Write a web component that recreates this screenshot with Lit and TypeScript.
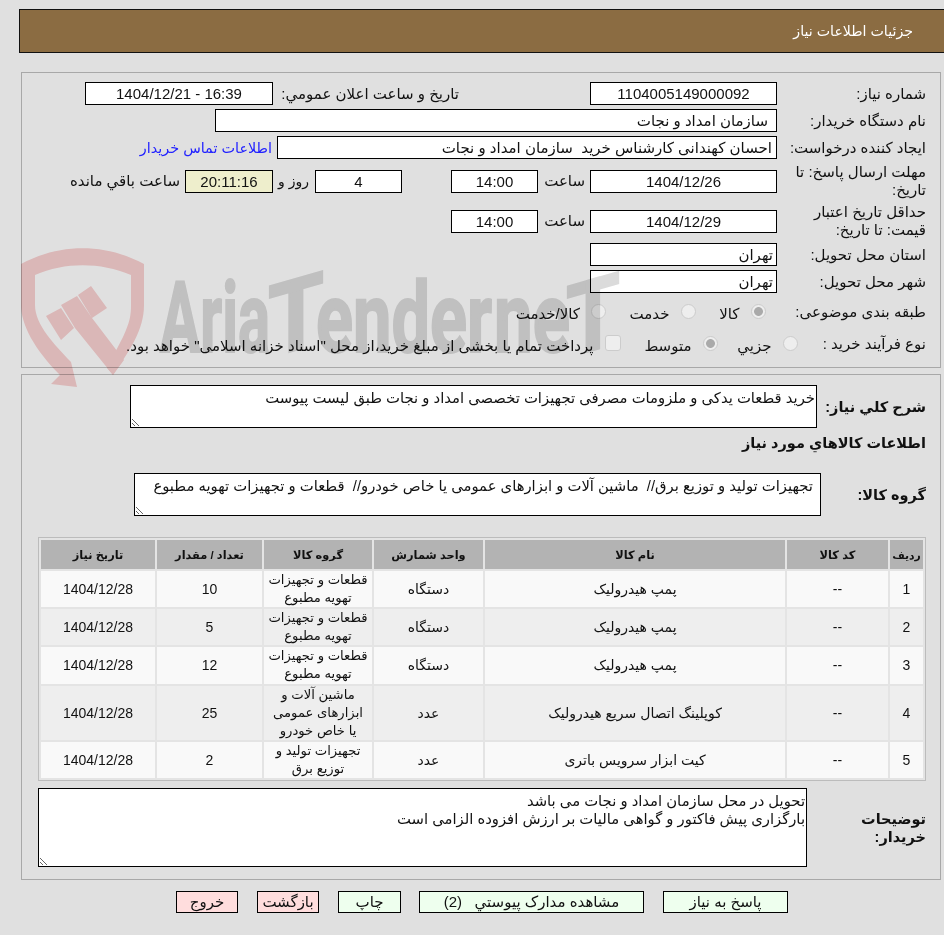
import { LitElement, html, css } from "lit";
import { customElement } from "lit/decorators.js";

const rows = [
  ["1", "--", "پمپ هیدرولیک", "دستگاه", "قطعات و تجهیزات\nتهویه مطبوع", "10", "1404/12/28"],
  ["2", "--", "پمپ هیدرولیک", "دستگاه", "قطعات و تجهیزات\nتهویه مطبوع", "5", "1404/12/28"],
  ["3", "--", "پمپ هیدرولیک", "دستگاه", "قطعات و تجهیزات\nتهویه مطبوع", "12", "1404/12/28"],
  ["4", "--", "کوپلینگ اتصال سریع هیدرولیک", "عدد", "ماشین آلات و\nابزارهای عمومی\nیا خاص خودرو", "25", "1404/12/28"],
  ["5", "--", "کیت ابزار سرویس باتری", "عدد", "تجهیزات تولید و\nتوزیع برق", "2", "1404/12/28"],
];
const heads = ["ردیف", "کد کالا", "نام کالا", "واحد شمارش", "گروه کالا", "تعداد / مقدار", "تاریخ نیاز"];

@customElement("app-root")
export class AppRoot extends LitElement {
  static styles = css`
    :host {
      display: block; overflow: hidden; position: relative; height: 935px;
      background: #e0e0e0; color: #111; direction: rtl;
      font: 15px/18px "Liberation Sans", "DejaVu Sans", sans-serif;
    }
    * { box-sizing: border-box; }
    .title {
      margin: 9px -10px 0 19px; height: 44px; background: #8b6c42; border: 1px solid #111;
      color: #fff; display: flex; align-items: center; padding-right: 40px; font-size: 14.2px;
    }
    .panel { width: 920px; margin: 0 3px 0 21px; border: 1px solid #a8a8a8; }
    .p1 { margin-top: 19px; padding: 9px 14px 11px 0; height: 296px; }
    .p2 { margin-top: 6px; padding: 10px 14px 12px 16px; height: 506px; }
    .row { display: flex; align-items: center; margin-bottom: 4px; min-height: 23px; }
    .tall { height: 36px; }
    .opts { height: 26px; margin: 6px 0 4px; }
    .lab { width: 149px; flex: none; padding-left: 6px; }
    .narrow { width: 128.5px; }
    input.f {
      height: 23px; border: 1px solid #000; background: #fff; color: #111; font: inherit;
      padding: 0 2px; text-align: center; flex: none; outline: none; border-radius: 0; margin: 0;
    }
    input.l { text-align: right; padding-right: 3px; }
    input.p8 { padding-right: 8px; }
    input.p4 { padding-right: 4px; }
    .w187 { width: 187px; } .w188 { width: 188px; } .w87 { width: 87px; }
    .w562 { width: 562px; } .w500 { width: 500px; }
    input.timer { width: 88px; background: #eeeecc; }
    .s1 { margin-right: 131px; width: 186px; flex: none; white-space: nowrap; }
    .link { color: #2222ff; margin-right: 5px; text-decoration: none; font-size: 14.4px; }
    .s2 { width: 52px; padding-right: 5px; flex: none; }
    input.s3 { margin-right: 49px; }
    .s4 { width: 42px; padding-right: 6px; flex: none; font-size: 14px; }
    .s5 { margin-right: 5px; white-space: nowrap; }
    .opt { display: flex; align-items: center; flex: none; white-space: nowrap; }
    .opt span { margin-right: 11px; position: relative; top: 2px; }
    .o1 { width: 70px; margin-right: 11.5px; }
    .o2 { width: 89.5px; }
    .o3 { width: 80px; }
    .o4 { width: 97px; }
    input.r, input.c {
      appearance: none; -webkit-appearance: none; width: 15px; height: 15px; margin: 0; flex: none;
      background: #eee; border: 1px solid #ccc; position: relative; top: -1px;
    }
    input.r { border-radius: 50%; }
    input.r:checked { background: radial-gradient(circle, #aaa 0 4px, #eee 4.8px); }
    input.c { border-radius: 3px; width: 16px; height: 16px; }
    .b { font-weight: bold; font-size: 14.5px; }
    .area {
      display: block; border: 1px solid #000; background: #fff; color: #111; font: inherit;
      font-size: 14.8px; padding: 3px 1px; resize: vertical; outline: none; flex: none; margin: 0;
      border-radius: 0; overflow: hidden;
    }
    .a1 { width: 687px; height: 43px; }
    .a2 { width: 687px; height: 43px; padding-right: 7px; }
    .a3 { width: 769px; height: 79px; }
    .lab2 { width: 109px; flex: none; }
    .lab3 { width: 105px; flex: none; }
    .lab4 { width: 119px; flex: none; padding-left: 30px; }
    .h { height: 18px; margin: 6px 0 21px; }
    .gr { margin: 0; }
    table {
      width: 888px; margin: 21px 0 7px 0; table-layout: fixed; border: 1px solid #bcbcbc;
      border-spacing: 2px; background: #e4e4e4; font-size: 14px;
    }
    th { background: #b3b3b3; height: 29px; padding: 0; font-size: 11.4px; font-weight: bold; }
    th:first-child { font-size: 10.8px; }
    td { text-align: center; padding: 0; line-height: 18.1px; white-space: pre-line; }
    td:nth-child(5) { font-size: 13.2px; }
    tbody tr:nth-child(odd) td { background: #f9f9f9; }
    tbody tr:nth-child(even) td { background: #eeeeee; }
    .notes { align-items: center; margin: 0; }
    .btns { display: flex; gap: 19px; margin-top: 11px; padding-right: 156px; }
    button {
      height: 22px; border: 1px solid #000; font: inherit; color: #111; padding: 0; margin: 0;
      flex: none; border-radius: 0; line-height: 20px;
    }
    .g { background: #eeffee; } .p { background: #ffdddd; }
    .bw1 { width: 125px; } .bw2 { width: 225px; } .bw3 { width: 63px; margin-right: -1px; } .bw4 { width: 62px; }
    .wm {
      position: absolute; left: 0; top: 0; width: 944px; height: 935px;
      pointer-events: none; mix-blend-mode: multiply; direction: ltr;
    }
    .wm text { font-family: Roboto, "Liberation Sans", sans-serif; font-weight: 700; fill: #dbdbdb; stroke: #dbdbdb; stroke-width: 2px; }
  `;

  render() {
    return html`
      <div class="title">جزئیات اطلاعات نیاز</div>

      <section class="panel p1">
        <div class="row">
          <div class="lab">شماره نیاز:</div>
          <input class="f w187" readonly .value=${"1104005149000092"} />
          <div class="s1">تاریخ و ساعت اعلان عمومي:</div>
          <input class="f w188" readonly .value=${"1404/12/21 - 16:39"} dir="ltr" />
        </div>
        <div class="row">
          <div class="lab">نام دستگاه خریدار:</div>
          <input class="f l p8 w562" readonly .value=${"سازمان امداد و نجات"} />
        </div>
        <div class="row">
          <div class="lab">ایجاد کننده درخواست:</div>
          <input class="f l p4 w500" readonly .value=${"احسان کهندانی کارشناس خرید  سازمان امداد و نجات"} />
          <a class="link" href="#">اطلاعات تماس خریدار</a>
        </div>
        <div class="row tall">
          <div class="lab">مهلت ارسال پاسخ: تا تاریخ:</div>
          <input class="f w187" readonly .value=${"1404/12/26"} />
          <div class="s2">ساعت</div>
          <input class="f w87" readonly .value=${"14:00"} />
          <input class="f w87 s3" readonly .value=${"4"} />
          <div class="s4">روز و</div>
          <input class="f timer" readonly .value=${"20:11:16"} />
          <div class="s5">ساعت باقي مانده</div>
        </div>
        <div class="row tall">
          <div class="lab">حداقل تاریخ اعتبار قیمت: تا تاریخ:</div>
          <input class="f w187" readonly .value=${"1404/12/29"} />
          <div class="s2">ساعت</div>
          <input class="f w87" readonly .value=${"14:00"} />
        </div>
        <div class="row">
          <div class="lab">استان محل تحویل:</div>
          <input class="f l w187" readonly .value=${"تهران"} />
        </div>
        <div class="row">
          <div class="lab">شهر محل تحویل:</div>
          <input class="f l w187" readonly .value=${"تهران"} />
        </div>
        <div class="row opts">
          <div class="lab">طبقه بندی موضوعی:</div>
          <label class="opt o1"><input class="r" type="radio" name="a" checked disabled /><span>کالا</span></label>
          <label class="opt o2"><input class="r" type="radio" name="a" disabled /><span>خدمت</span></label>
          <label class="opt"><input class="r" type="radio" name="a" disabled /><span>کالا/خدمت</span></label>
        </div>
        <div class="row opts">
          <div class="lab narrow">نوع فرآیند خرید :</div>
          <label class="opt o3"><input class="r" type="radio" name="b" disabled /><span>جزيي</span></label>
          <label class="opt o4"><input class="r" type="radio" name="b" checked disabled /><span>متوسط</span></label>
          <label class="opt"><input class="c" type="checkbox" disabled /><span>پرداخت تمام یا بخشی از مبلغ خرید،از محل "اسناد خزانه اسلامی" خواهد بود.</span></label>
        </div>
      </section>

      <section class="panel p2">
        <div class="row gr">
          <div class="lab2 b">شرح کلي نیاز:</div>
          <textarea class="area a1" readonly .value=${"خرید قطعات یدکی و ملزومات مصرفی تجهیزات تخصصی امداد و نجات طبق لیست پیوست"}></textarea>
        </div>
        <div class="b h">اطلاعات کالاهاي مورد نیاز</div>
        <div class="row gr">
          <div class="lab3 b">گروه کالا:</div>
          <textarea class="area a2" readonly .value=${"تجهیزات تولید و توزیع برق//  ماشین آلات و ابزارهای عمومی یا خاص خودرو//  قطعات و تجهیزات تهویه مطبوع"}></textarea>
        </div>
        <table>
          <colgroup>
            ${[33, 101, 300, 109, 108, 105, 114].map((w) => html`<col style="width:${w}px" />`)}
          </colgroup>
          <thead><tr>${heads.map((h) => html`<th>${h}</th>`)}</tr></thead>
          <tbody>
            ${rows.map((r) => html`<tr>${r.map((c) => html`<td>${c}</td>`)}</tr>`)}
          </tbody>
        </table>
        <div class="row notes">
          <div class="lab4 b">توضیحات خریدار:</div>
          <textarea class="area a3" readonly .value=${"تحویل در محل سازمان امداد و نجات می باشد\nبارگزاری پیش فاکتور و گواهی مالیات بر ارزش افزوده الزامی است"}></textarea>
        </div>
      </section>

      <div class="btns">
        <button class="g bw1">پاسخ به نیاز</button>
        <button class="g bw2">مشاهده مدارک پیوستي&nbsp;&nbsp; (2)</button>
        <button class="g bw3">چاپ</button>
        <button class="p bw4">بازگشت</button>
        <button class="p bw4">خروج</button>
      </div>

      <svg class="wm" viewBox="0 0 944 935" aria-hidden="true">
        <path fill="#f9d1d1" d="M21,264 C60,243 105,243 144,264 L144,305 C144,330 130,350 113,375 L107,368 L123,337 C130,322 131,315 131,305 L131,275 C100,262 65,262 35,275 L35,305 C35,325 55,345 70,361 L71,362 L77,387 L51,384 L60,375 C35,350 21,325 21,305 Z" />
        <path fill="#f9d1d1" d="M46,316 L61,308 L74,328 L61,340 Z M61,305 L77,296 L92,318 L124,360 L113,375 L75,328 Z M78,295 L91,286 L107,308 L92,318 Z" />
        <text x="160" y="352" font-size="98" textLength="110" lengthAdjust="spacingAndGlyphs">Aria</text>
        <text transform="translate(268,358) skewY(-16)" font-size="100" textLength="56" lengthAdjust="spacingAndGlyphs">T</text>
        <text x="316" y="352" font-size="98" textLength="176" lengthAdjust="spacingAndGlyphs">ender</text>
        <text x="494" y="352" font-size="98" textLength="76" lengthAdjust="spacingAndGlyphs">ne</text>
        <text transform="translate(566,358) skewY(-16)" font-size="100" textLength="54" lengthAdjust="spacingAndGlyphs">T</text>
      </svg>
    `;
  }
}
